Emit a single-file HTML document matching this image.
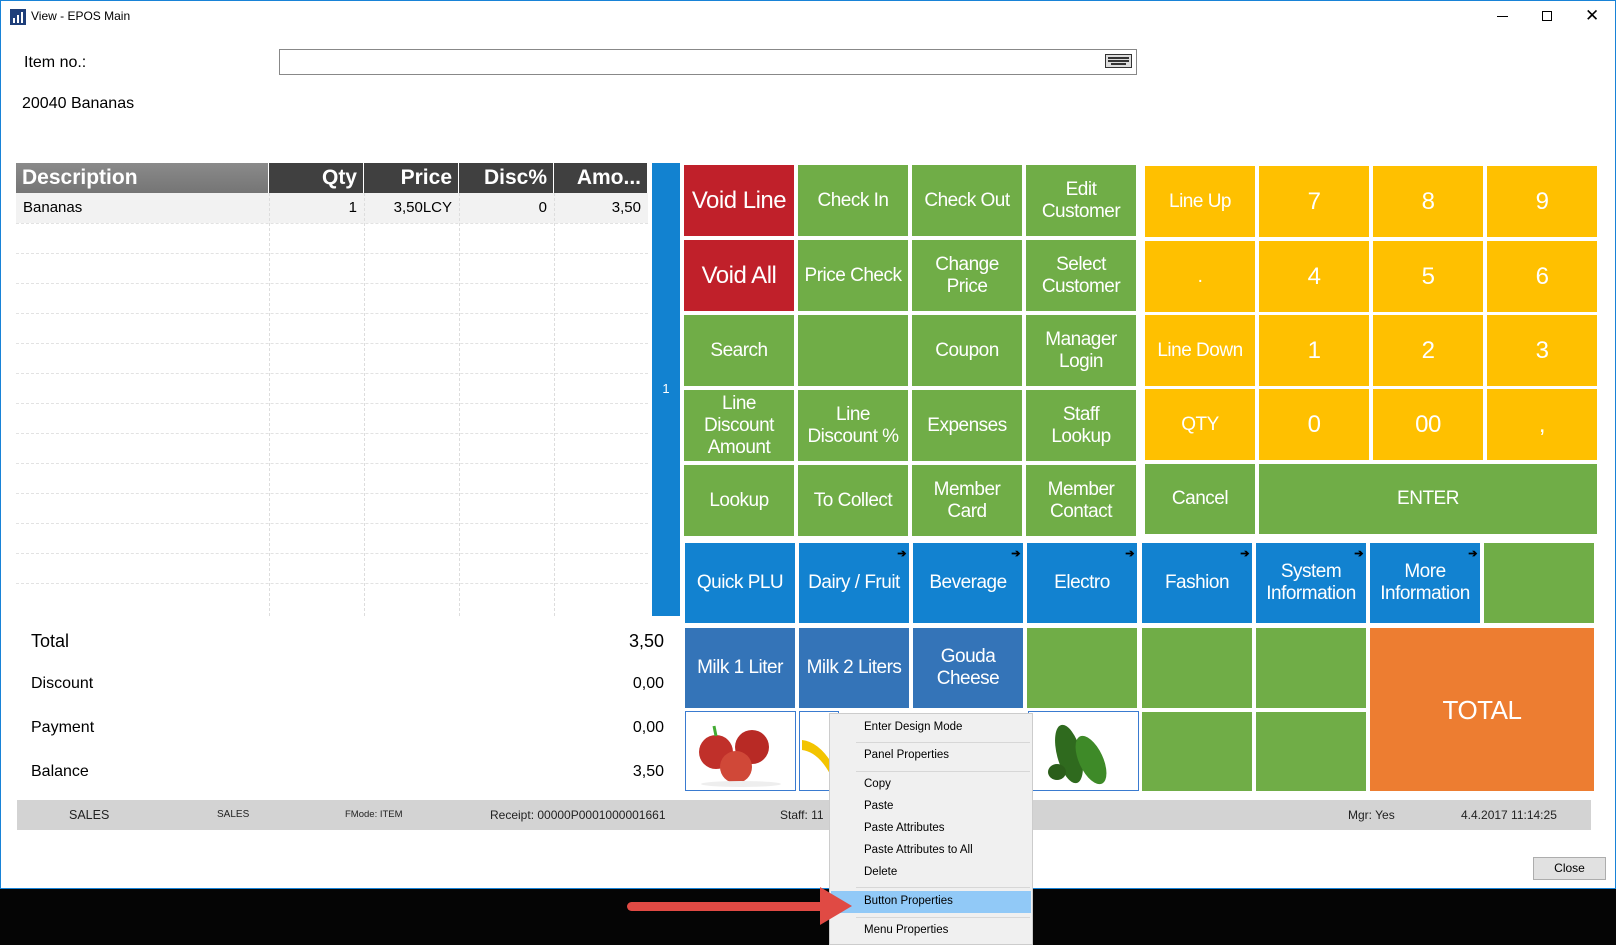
<!DOCTYPE html>
<html><head><meta charset="utf-8"><style>
*{margin:0;padding:0;box-sizing:border-box}
body{width:1616px;height:945px;position:relative;background:#050505;font-family:"Liberation Sans",sans-serif;overflow:hidden}
.abs{position:absolute}
#win{position:absolute;left:0;top:0;width:1616px;height:889px;background:#fff;border:1px solid #1883d7}
.b{position:absolute;color:#fff;display:flex;align-items:center;justify-content:center;text-align:center;font-size:19px;line-height:22px;letter-spacing:-0.5px}
.g{background:#70ad47}.r{background:#c0202a;font-size:24px}.y{background:#ffc000;font-size:19px}.bl{background:#1282d0}.mb{background:#3474b8}.o{background:#ed7d31;font-size:26px}
.arr{position:absolute;right:3px;top:0;font-size:11px;color:#000;font-weight:bold}
.th{position:absolute;top:162px;height:30px;color:#fff;font-weight:bold;font-size:21px;line-height:30px;padding:0 6px;text-align:right;border-right:1px solid #fff}
.td{position:absolute;font-size:15px;line-height:30px;padding:0 7px;text-align:right}
.vl{position:absolute;top:192px;height:423px;border-left:1px dashed #ddd}
.hl{position:absolute;left:15px;width:632px;border-top:1px dashed #e2e2e2}
.lbl{position:absolute;left:30px;font-size:16px}
.val{position:absolute;right:951px;font-size:16px}
.st{position:absolute;top:799px;height:30px;line-height:30px;font-size:12px;color:#222}
.mi{position:absolute;left:864px;font-size:11.5px;color:#000}
.sep{position:absolute;left:856px;width:174px;border-top:1px solid #d7d7d7}
</style></head><body>
<div id="win">
<svg class="abs" style="left:9px;top:8px" width="16" height="16"><rect width="16" height="16" fill="#1f3f7a"/><rect x="3" y="9" width="2" height="5" fill="#fff"/><rect x="7" y="6" width="2" height="8" fill="#fff"/><rect x="11" y="3" width="2" height="11" fill="#fff"/></svg>
<div class="abs" style="left:30px;top:8px;font-size:12px">View - EPOS Main</div>
<div class="abs" style="left:1496px;top:15px;width:11px;border-top:1px solid #000"></div>
<div class="abs" style="left:1541px;top:10px;width:10px;height:10px;border:1px solid #000"></div>
<div class="abs" style="left:1584px;top:5px;font-size:17px">✕</div>
<div class="abs" style="left:23px;top:53px;font-size:16px">Item no.:</div>
<div class="abs" style="left:278px;top:48px;width:858px;height:26px;border:1px solid #888"></div>
<svg class="abs" style="left:1104px;top:53px" width="27" height="14"><rect x=".5" y=".5" width="26" height="13" fill="#ddd" stroke="#333"/><g fill="#333"><rect x="3" y="3" width="21" height="2"/><rect x="3" y="6" width="21" height="2"/><rect x="6" y="9" width="15" height="2"/></g></svg>
<div class="abs" style="left:21px;top:94px;font-size:16px">20040 Bananas</div>

<div class="th" style="left:15px;width:253px;text-align:left;background:linear-gradient(#8a8a8a,#757575)">Description</div>
<div class="th" style="left:268px;width:95px;background:#404040">Qty</div>
<div class="th" style="left:363px;width:95px;background:#404040">Price</div>
<div class="th" style="left:458px;width:95px;background:#404040">Disc%</div>
<div class="th" style="left:553px;width:94px;background:#404040">Amo...</div>
<div class="abs" style="left:15px;top:192px;width:632px;height:30px;background:#f2f2f2"></div>
<div class="td" style="left:15px;top:192px;text-align:left">Bananas</div>
<div class="td" style="left:268px;top:192px;width:95px">1</div>
<div class="td" style="left:363px;top:192px;width:95px">3,50LCY</div>
<div class="td" style="left:458px;top:192px;width:95px">0</div>
<div class="td" style="left:553px;top:192px;width:94px">3,50</div>
<div class="vl" style="left:268px"></div><div class="vl" style="left:363px"></div><div class="vl" style="left:458px"></div><div class="vl" style="left:553px"></div>
<div class="hl" style="top:222px"></div><div class="hl" style="top:252px"></div><div class="hl" style="top:282px"></div><div class="hl" style="top:312px"></div><div class="hl" style="top:342px"></div><div class="hl" style="top:372px"></div><div class="hl" style="top:402px"></div><div class="hl" style="top:432px"></div><div class="hl" style="top:462px"></div><div class="hl" style="top:492px"></div><div class="hl" style="top:522px"></div><div class="hl" style="top:552px"></div><div class="hl" style="top:582px"></div>

<div class="abs" style="left:651px;top:162px;width:28px;height:453px;background:#1282d0;color:#fff;font-size:13px;text-align:center;padding-top:218px">1</div>

<div class="b r" style="left:683px;top:164px;width:110px;height:71px">Void Line</div>
<div class="b g" style="left:797px;top:164px;width:110px;height:71px">Check In</div>
<div class="b g" style="left:911px;top:164px;width:110px;height:71px">Check Out</div>
<div class="b g" style="left:1025px;top:164px;width:110px;height:71px">Edit<br>Customer</div>
<div class="b r" style="left:683px;top:239px;width:110px;height:71px">Void All</div>
<div class="b g" style="left:797px;top:239px;width:110px;height:71px">Price Check</div>
<div class="b g" style="left:911px;top:239px;width:110px;height:71px">Change<br>Price</div>
<div class="b g" style="left:1025px;top:239px;width:110px;height:71px">Select<br>Customer</div>
<div class="b g" style="left:683px;top:314px;width:110px;height:71px">Search</div>
<div class="b g" style="left:797px;top:314px;width:110px;height:71px"></div>
<div class="b g" style="left:911px;top:314px;width:110px;height:71px">Coupon</div>
<div class="b g" style="left:1025px;top:314px;width:110px;height:71px">Manager<br>Login</div>
<div class="b g" style="left:683px;top:389px;width:110px;height:71px">Line<br>Discount<br>Amount</div>
<div class="b g" style="left:797px;top:389px;width:110px;height:71px">Line<br>Discount %</div>
<div class="b g" style="left:911px;top:389px;width:110px;height:71px">Expenses</div>
<div class="b g" style="left:1025px;top:389px;width:110px;height:71px">Staff<br>Lookup</div>
<div class="b g" style="left:683px;top:464px;width:110px;height:71px">Lookup</div>
<div class="b g" style="left:797px;top:464px;width:110px;height:71px">To Collect</div>
<div class="b g" style="left:911px;top:464px;width:110px;height:71px">Member<br>Card</div>
<div class="b g" style="left:1025px;top:464px;width:110px;height:71px">Member<br>Contact</div>

<div class="b y" style="left:1144px;top:165px;width:110px;height:71px">Line Up</div>
<div class="b y" style="left:1258px;top:165px;width:110px;height:71px;font-size:24px">7</div>
<div class="b y" style="left:1372px;top:165px;width:110px;height:71px;font-size:24px">8</div>
<div class="b y" style="left:1486px;top:165px;width:110px;height:71px;font-size:24px">9</div>
<div class="b y" style="left:1144px;top:240px;width:110px;height:71px">.</div>
<div class="b y" style="left:1258px;top:240px;width:110px;height:71px;font-size:24px">4</div>
<div class="b y" style="left:1372px;top:240px;width:110px;height:71px;font-size:24px">5</div>
<div class="b y" style="left:1486px;top:240px;width:110px;height:71px;font-size:24px">6</div>
<div class="b y" style="left:1144px;top:314px;width:110px;height:71px">Line Down</div>
<div class="b y" style="left:1258px;top:314px;width:110px;height:71px;font-size:24px">1</div>
<div class="b y" style="left:1372px;top:314px;width:110px;height:71px;font-size:24px">2</div>
<div class="b y" style="left:1486px;top:314px;width:110px;height:71px;font-size:24px">3</div>
<div class="b y" style="left:1144px;top:388px;width:110px;height:71px">QTY</div>
<div class="b y" style="left:1258px;top:388px;width:110px;height:71px;font-size:24px">0</div>
<div class="b y" style="left:1372px;top:388px;width:110px;height:71px;font-size:24px">00</div>
<div class="b y" style="left:1486px;top:388px;width:110px;height:71px;font-size:24px">,</div>
<div class="b g" style="left:1144px;top:463px;width:110px;height:70px">Cancel</div>
<div class="b g" style="left:1258px;top:463px;width:338px;height:70px">ENTER</div>

<div class="b bl" style="left:684px;top:542px;width:110px;height:80px">Quick PLU</div>
<div class="b bl" style="left:798px;top:542px;width:110px;height:80px">Dairy / Fruit<span class="arr">➔</span></div>
<div class="b bl" style="left:912px;top:542px;width:110px;height:80px">Beverage<span class="arr">➔</span></div>
<div class="b bl" style="left:1026px;top:542px;width:110px;height:80px">Electro<span class="arr">➔</span></div>
<div class="b bl" style="left:1141px;top:542px;width:110px;height:80px">Fashion<span class="arr">➔</span></div>
<div class="b bl" style="left:1255px;top:542px;width:110px;height:80px">System<br>Information<span class="arr">➔</span></div>
<div class="b bl" style="left:1369px;top:542px;width:110px;height:80px">More<br>Information<span class="arr">➔</span></div>
<div class="b g" style="left:1483px;top:542px;width:110px;height:80px"></div>
<div class="b mb" style="left:684px;top:627px;width:110px;height:80px">Milk 1 Liter</div>
<div class="b mb" style="left:798px;top:627px;width:110px;height:80px">Milk 2 Liters</div>
<div class="b mb" style="left:912px;top:627px;width:110px;height:80px">Gouda<br>Cheese</div>
<div class="b g" style="left:1026px;top:627px;width:110px;height:80px"></div>
<div class="b g" style="left:1141px;top:627px;width:110px;height:80px"></div>
<div class="b g" style="left:1255px;top:627px;width:110px;height:80px"></div>
<div class="b o" style="left:1369px;top:627px;width:224px;height:163px">TOTAL</div>
<div class="b g" style="left:1141px;top:711px;width:110px;height:79px"></div>
<div class="b g" style="left:1255px;top:711px;width:110px;height:79px"></div>
<div class="abs" style="left:684px;top:710px;width:111px;height:80px;border:1px solid #3a7bd0;background:#fff">
<svg width="109" height="78"><circle cx="30" cy="40" r="17" fill="#c0302a"/><circle cx="66" cy="35" r="17" fill="#b82a25"/><circle cx="50" cy="55" r="16" fill="#d04838"/><path d="M30 24 L28 14" stroke="#4a3" stroke-width="3"/><ellipse cx="55" cy="72" rx="40" ry="3" fill="#eee"/></svg></div>
<div class="abs" style="left:798px;top:710px;width:40px;height:80px;border:1px solid #3a7bd0;background:#fff">
<svg width="38" height="78"><path d="M2 28 Q20 30 34 55 L30 62 Q18 40 2 38Z" fill="#f3c400"/></svg></div>
<div class="abs" style="left:1027px;top:710px;width:111px;height:80px;border:1px solid #3a7bd0;background:#fff">
<svg width="109" height="78"><ellipse cx="40" cy="42" rx="12" ry="30" fill="#2f6a1e" transform="rotate(-15 40 42)"/><ellipse cx="62" cy="48" rx="12" ry="26" fill="#3e8a28" transform="rotate(-25 62 48)"/><ellipse cx="28" cy="60" rx="9" ry="8" fill="#2b5e1a"/></svg></div>

<div class="lbl" style="top:630px;font-size:18px">Total</div><div class="val" style="top:630px;font-size:18px">3,50</div>
<div class="lbl" style="top:674px">Discount</div><div class="val" style="top:674px">0,00</div>
<div class="lbl" style="top:718px">Payment</div><div class="val" style="top:718px">0,00</div>
<div class="lbl" style="top:762px">Balance</div><div class="val" style="top:762px">3,50</div>

<div class="abs" style="left:16px;top:799px;width:1574px;height:30px;background:#d3d3d3"></div>
<div class="st" style="left:68px;font-size:12.5px">SALES</div>
<div class="st" style="left:216px;font-size:10px">SALES</div>
<div class="st" style="left:344px;font-size:9.5px">FMode: ITEM</div>
<div class="st" style="left:489px">Receipt: 00000P0001000001661</div>
<div class="st" style="left:779px">Staff: 11</div>
<div class="st" style="left:1347px">Mgr: Yes</div>
<div class="st" style="left:1460px">4.4.2017 11:14:25</div>
<div class="abs" style="left:1532px;top:856px;width:73px;height:23px;border:1px solid #adadad;background:#e1e1e1;font-size:12px;text-align:center;line-height:21px">Close</div>
</div>

<div class="abs" style="left:829px;top:713px;width:204px;height:232px;background:#f0f0f0;border:1px solid #ccc"></div>
<div class="mi" style="top:721px">Enter Design Mode</div>
<div class="sep" style="top:742px"></div>
<div class="mi" style="top:749px">Panel Properties</div>
<div class="sep" style="top:771px"></div>
<div class="mi" style="top:778px">Copy</div>
<div class="mi" style="top:800px">Paste</div>
<div class="mi" style="top:822px">Paste Attributes</div>
<div class="mi" style="top:844px">Paste Attributes to All</div>
<div class="mi" style="top:866px">Delete</div>
<div class="sep" style="top:887px"></div>
<div class="abs" style="left:831px;top:891px;width:200px;height:22px;background:#91c9f7"></div>
<div class="mi" style="top:895px">Button Properties</div>
<div class="sep" style="top:917px"></div>
<div class="mi" style="top:924px">Menu Properties</div>

<div class="abs" style="left:627px;top:902px;width:200px;height:9px;background:#e04a44;border-radius:5px"></div>
<svg class="abs" style="left:820px;top:887px" width="34" height="40"><path d="M0 0 L32 19 L0 38Z" fill="#e04a44"/></svg>
</body></html>
